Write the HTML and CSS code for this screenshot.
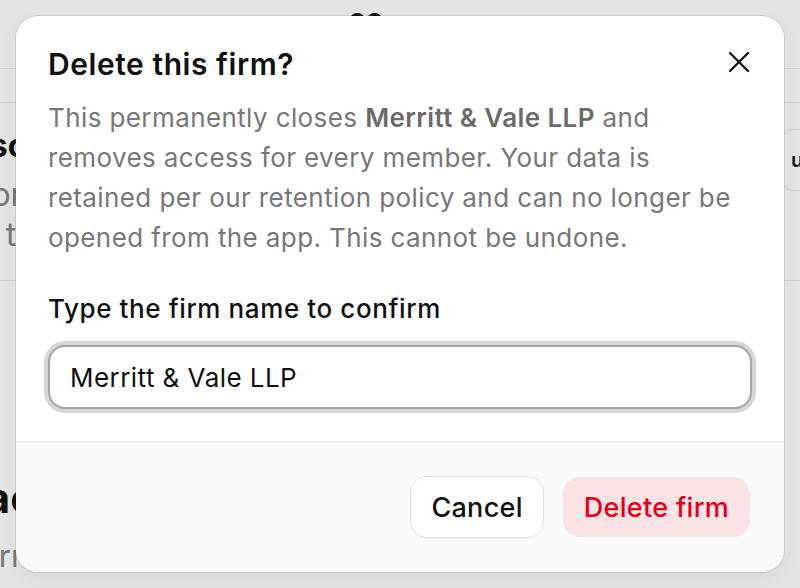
FILE: index.html
```html
<!DOCTYPE html>
<html lang="en">
<head>
<meta charset="utf-8">
<title>Delete this firm?</title>
<link rel="stylesheet" href="styles.css">
</head>
<body>
<div class="page">
  <header class="page-head"><span class="page-head-title">oo</span></header>
  <div class="page-tabs"></div>
  <section class="page-row">
    <div class="row-text">
      <div class="row-title">Disconnect</div>
      <div class="row-sub row-sub-a">Reports</div>
      <div class="row-sub row-sub-b">Audit trail</div>
    </div>
    <div class="row-action">update</div>
  </section>
  <section class="page-section">
    <div class="section-title">Deactivate</div>
    <div class="section-sub">Firm members and records</div>
  </section>
</div>

<div class="modal" role="dialog" aria-labelledby="dlg-title">
  <div class="modal-body">
    <div class="modal-head">
      <h2 class="modal-title" id="dlg-title">Delete this firm?</h2>
      <button class="close-btn" aria-label="Close">
        <svg width="24" height="24" viewBox="0 0 24 24" fill="none" stroke="#111" stroke-width="2.3" stroke-linecap="round"><path d="M3 3 L21 21 M21 3 L3 21"/></svg>
      </button>
    </div>
    <p class="modal-desc">This permanently closes <strong>Merritt &amp; Vale LLP</strong> and removes access for every member. Your data is retained per our retention policy and can no longer be opened from the app. This cannot be undone.</p>
    <label class="field-label" for="firm-name">Type the firm name to confirm</label>
    <input class="field-input" id="firm-name" type="text" value="Merritt &amp; Vale LLP">
  </div>
  <div class="modal-foot">
    <button class="btn btn-cancel">Cancel</button>
    <button class="btn btn-danger">Delete firm</button>
  </div>
</div>
</body>
</html>
```

FILE: styles.css
```css
* { box-sizing: border-box; }
html, body { margin: 0; padding: 0; }
body {
  width: 800px;
  height: 588px;
  overflow: hidden;
  background: #e4e4e4;
  font-family: Inter, "Noto Sans", "Liberation Sans", sans-serif;
  position: relative;
}

/* background page (dimmed) */
.page { height: 588px; color: #111; }
.page-head {
  height: 69px;
  border-bottom: 1px solid #d2d2d2;
  display: flex;
  justify-content: center;
  padding: 3px 68px 0 0;
}
.page-head-title { font-size: 28px; line-height: 32px; font-weight: 700; }
.page-tabs { height: 34px; border-bottom: 1px solid #d2d2d2; }
.page-row {
  height: 178px;
  border-bottom: 1px solid #d2d2d2;
  display: flex;
  justify-content: space-between;
  align-items: flex-start;
}
.row-text { padding-top: 23px; white-space: nowrap; }
.row-title { font-size: 32px; line-height: 40px; font-weight: 700; margin-left: -42px; }
.row-sub { font-size: 32px; line-height: 40px; color: #777; }
.row-sub-a { margin-top: 9px; margin-left: -67px; }
.row-sub-b { margin-left: -82px; }
.row-action {
  margin-top: 26px;
  margin-right: -80px;
  width: 100px;
  height: 62px;
  border: 1px solid #cfcfcf;
  border-radius: 14px;
  padding-left: 10px;
  font-size: 20px;
  font-weight: 600;
  line-height: 60px;
}
.page-section { padding-top: 193px; white-space: nowrap; }
.section-title { font-size: 42px; line-height: 48px; font-weight: 700; margin-left: -70px; }
.section-sub { font-size: 31px; line-height: 40px; color: #777; margin-top: 14px; margin-left: -27px; }

/* modal */
.modal {
  position: absolute;
  left: 16px;
  top: 16px;
  width: 768px;
  background: #fff;
  border-radius: 22px;
  overflow: hidden;
  box-shadow: 0 0 0 1px rgba(0,0,0,0.09), 0 6px 20px rgba(0,0,0,0.06);
}
.modal-body { padding: 32px 32px 32px; }
.modal-head {
  display: flex;
  justify-content: space-between;
  align-items: flex-start;
}
.modal-title {
  margin: 0;
  font-size: 30px;
  line-height: 32px;
  font-weight: 600;
  color: #111;
  letter-spacing: 0.55px;
}
.close-btn {
  margin: 2px 1px 0 0;
  padding: 0;
  border: 0;
  background: none;
  width: 24px;
  height: 24px;
  display: flex;
}
.modal-desc {
  margin: 18px 0 0;
  max-width: 694px;
  font-size: 26px;
  line-height: 40px;
  letter-spacing: 0.4px;
  color: #777;
}
.modal-desc strong { font-weight: 600; color: #6a6a6a; }
.field-label {
  display: block;
  margin-top: 35px;
  font-size: 26px;
  line-height: 32px;
  font-weight: 500;
  letter-spacing: 0.6px;
  color: #111;
}
.field-input {
  display: block;
  width: 100%;
  height: 64px;
  margin-top: 20px;
  padding: 0 20px;
  border: 2px solid #a6a6a6;
  border-radius: 17px;
  box-shadow: 0 0 0 4px #d6d6d6;
  font-family: inherit;
  font-size: 26px;
  letter-spacing: 0.45px;
  color: #111;
  background: #fff;
  outline: none;
}
.modal-foot {
  border-top: 1px solid #e6e6e6;
  background: #fafafa;
  height: 131px;
  padding: 0 34px 0 32px;
  display: flex;
  justify-content: flex-end;
  align-items: center;
  gap: 19px;
}
.btn {
  font-family: inherit;
  font-size: 27px;
  font-weight: 500;
  letter-spacing: 0.3px;
  border-radius: 17px;
  cursor: pointer;
}
.btn-cancel {
  height: 62px;
  padding: 0 20px;
  background: #fff;
  border: 1px solid #e0e0e0;
  color: #111;
}
.btn-danger {
  height: 60px;
  padding: 0 21px;
  border: 0;
  background: #fbe2e5;
  color: #e0001b;
}
```
